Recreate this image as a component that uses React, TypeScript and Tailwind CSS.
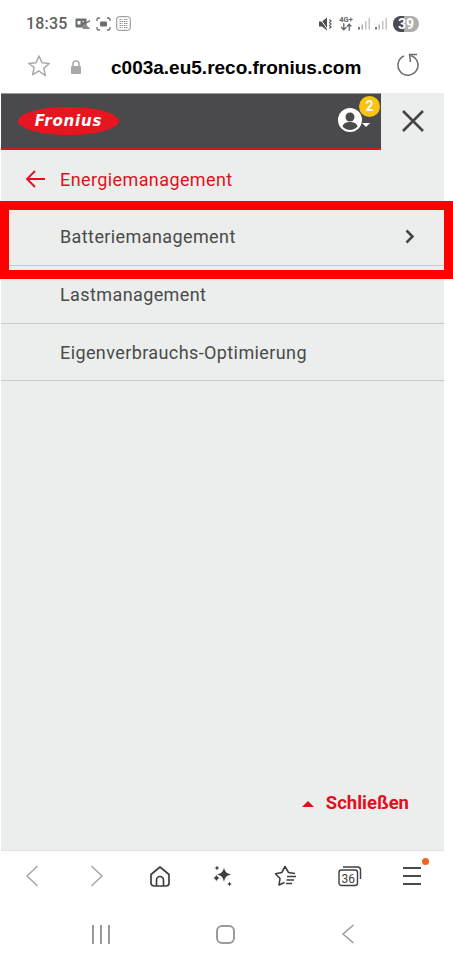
import React from "react";

function StatusLeft() {
  return (
    <div className="flex items-center">
      <span className="text-[16px] font-medium text-[#5f5f5f] leading-none tracking-[0.2px]">18:35</span>
      <svg width="16" height="13" viewBox="0 0 16 12" className="ml-[7px]">
        <rect x="0.5" y="1" width="11" height="9" rx="1" fill="#6f6f6f" />
        <rect x="2.5" y="3.500" width="3" height="3.500" fill="#fff" />
        <path d="M7 3.500l1 1.500 1-1.500z" fill="#fff" />
        <path d="M7 8.500L9.500 6l6 5.500H8z" fill="#8a8a8a" />
        <path d="M9.500 5.500L15 2.500v1.500l-4 2.200z" fill="#6f6f6f" />
      </svg>
      <svg width="15" height="14" viewBox="0 0 15 14" className="ml-[5px]" fill="none" stroke="#6f6f6f" strokeWidth="1.300">
        <path d="M1 4V2.500A1.500 1.500 0 012.500 1H4M11 1h1.500A1.500 1.500 0 0114 2.500V4M14 10v1.500a1.500 1.500 0 01-1.500 1.500H11M4 13H2.500A1.500 1.500 0 011 11.500V10" />
        <rect x="4" y="4.500" width="7" height="5" rx="1" fill="#6f6f6f" stroke="none" />
      </svg>
      <svg width="15" height="15" viewBox="0 0 15 15" className="ml-[5px]" fill="none" stroke="#8a8a8a" strokeWidth="1">
        <rect x="0.700" y="0.700" width="13.600" height="13.600" rx="2.500" />
        <path d="M3.500 3.500h3M8 3.500h3.500M3.500 5.500h8M3.500 7.500h3M8 7.500h3.500M3.500 9.500h8M3.500 11.500h3M8 11.500h3.500" strokeDasharray="1.500 .6" />
      </svg>
    </div>
  );
}

function Bars() {
  return (
    <svg width="13" height="13" viewBox="0 0 13 13">
      <rect x="0" y="10" width="2" height="2.500" fill="#777" />
      <rect x="3.500" y="7.500" width="1.500" height="5" fill="#aaa" />
      <rect x="7" y="4" width="1.500" height="8.500" fill="#c4c4c4" />
      <rect x="10.500" y="1" width="1.500" height="11.500" fill="#c4c4c4" />
    </svg>
  );
}

function StatusRight() {
  return (
    <div className="flex items-center">
      <svg width="13" height="14" viewBox="0 0 13 14" fill="#4f4f4f">
        <path d="M0 4.500h3L8 .5v13L3 9.500H0z" />
        <path d="M0.500 1l8.500 12" stroke="#fff" strokeWidth="1" />
        <path d="M10.500 2.500l1.500 1.500-1.500 1.500 1.500 1.500-1.500 1.500 1.500 1.500-1.500 1.500" fill="none" stroke="#4f4f4f" strokeWidth="1.100" />
      </svg>
      <div className="ml-[7px] w-[14px] flex flex-col items-center text-[#666] font-bold">
        <span className="text-[7.500px] leading-[7px]">4G+</span>
        <svg width="13" height="8" viewBox="0 0 12 7" fill="none" stroke="#666" strokeWidth="1.200">
          <path d="M3.500 0v6M1 3.500L3.500 6 6 3.500M8.500 7V1M6.500 3l2-2 2 2" />
        </svg>
      </div>
      <div className="ml-[5px]"><Bars /></div>
      <div className="ml-[4px]"><Bars /></div>
      <div className="ml-[5px] h-[16px] w-[26px] rounded-full bg-[#aeaeae] overflow-hidden relative flex items-center justify-center">
        <div className="absolute left-0 top-0 h-full w-[11px] bg-[#4b4b4b]" />
        <span className="relative text-[14px] leading-none font-bold text-white">39</span>
      </div>
    </div>
  );
}

function FroniusLogo() {
  return (
    <div className="w-[101px] h-[28px] rounded-[50%] bg-[#e8141f] flex items-center justify-center overflow-hidden">
      <span className="text-white italic font-bold text-[15px] leading-none tracking-[0.8px] font-['DejaVu_Sans',sans-serif]">Fronius</span>
    </div>
  );
}

function MenuRow({ label, chevron, last }: { label: string; chevron?: boolean; last?: boolean }) {
  return (
    <div className={last ? "h-[57px] flex items-center justify-between pt-[1px] pl-[59px] pr-[29px] border-b border-[#c9cbca]" : "h-[58px] flex items-center justify-between pl-[59px] pr-[29px] border-b border-[#c9cbca]"}>
      <span className="text-[18px] text-[#4a4a4a] tracking-[0.4px]">{label}</span>
      {chevron && (
        <svg width="10" height="15" viewBox="0 0 10 15" fill="none" stroke="#444" strokeWidth="2.500">
          <path d="M1.500 1.500l6 6-6 6" />
        </svg>
      )}
    </div>
  );
}

function BottomNav() {
  return (
    <div className="h-[50px] flex items-center justify-between pl-[25px] pr-[32px] pb-[1px] bg-white">
      <svg width="14" height="24" viewBox="0 0 14 24" fill="none" stroke="#a6a6a6" strokeWidth="1.500"><path d="M12.500 2L2 12l10.500 10" /></svg>
      <svg width="14" height="24" viewBox="0 0 14 24" fill="none" stroke="#a6a6a6" strokeWidth="1.500" className="ml-[10px]"><path d="M1.500 2L12 12 1.500 22" /></svg>
      <svg width="22" height="22" viewBox="0 0 22 22" fill="none" stroke="#3f3f3f" strokeWidth="1.700" className="ml-[4px]">
        <path d="M2 9.500L11 2l9 7.500V18a3 3 0 01-3 3H5a3 3 0 01-3-3z" strokeLinejoin="round" />
        <path d="M7.500 21v-6a3.500 3.500 0 017 0v6" />
      </svg>
      <svg width="22" height="22" viewBox="0 0 22 22" fill="#3f3f3f">
        <path d="M13 2.500c.9 4.300 2.600 6 7 7-4.400 1-6.100 2.700-7 7.500-.9-4.800-2.600-6.500-7-7.500 4.400-1 6.100-2.700 7-7z" />
        <path d="M5.500 8.500c.5 2.800 1.600 3.900 4.500 4.500-2.900.6-4 1.700-4.500 4.500C5 14.700 3.900 13.600 1 13c2.900-.6 4-1.700 4.500-4.500z" stroke="#fff" strokeWidth="0.800" />
        <path d="M6 .5l.8 1.700L8.500 3l-1.700.8L6 5.500l-.8-1.700L3.500 3l1.700-.8zM18.500 16.500l.7 1.800 1.800.7-1.800.7-.7 1.800-.7-1.800L16 19l1.800-.7z" />
      </svg>
      <svg width="23" height="22" viewBox="0 0 23 22" fill="none" stroke="#3f3f3f" strokeWidth="1.600" strokeLinejoin="round">
        <path d="M21 8.500l-6.500-1L11 1.500 7.800 7.500 1.500 8.800l4.500 4.700-1 6.500 5.500-2.500" />
        <path d="M13 11.500h9M12.500 15h7.500M12 18.500h6" />
      </svg>
      <svg width="24" height="22" viewBox="0 0 24 22" fill="none" stroke="#3f3f3f" strokeWidth="1.400">
        <rect x="1" y="5" width="18.500" height="15.500" rx="2.500" />
        <path d="M5 2h14.500a3 3 0 013 3v9" />
        <text x="10.200" y="17.500" textAnchor="middle" fontSize="12" fontFamily="Roboto, sans-serif" fill="#3f3f3f" stroke="none">36</text>
      </svg>
      <div className="relative w-[18px] h-[18px] flex flex-col justify-between">
        <div className="h-[2px] bg-[#4a4a4a]" />
        <div className="h-[2px] bg-[#4a4a4a]" />
        <div className="h-[2px] bg-[#4a4a4a]" />
        <div className="absolute -top-[9px] -right-[8px] w-[7px] h-[7px] rounded-full bg-[#f0641e]" />
      </div>
    </div>
  );
}

export default function App() {
  return (
    <div className="relative w-[453px] h-[960px] bg-white overflow-hidden font-['Roboto',sans-serif]">
      <div className="h-[46px] pl-[26px] pr-[34px] pt-[1px] flex items-center justify-between">
        <StatusLeft />
        <StatusRight />
      </div>
      <div className="h-[47px] flex items-center pl-[27px]">
        <svg width="24" height="24" viewBox="0 0 24 24" fill="none" stroke="#a9a9a9" strokeWidth="1.500" strokeLinejoin="round" className="mb-[7px]">
          <path d="M12 2l3 6.800 7.300.7-5.500 4.900 1.600 7.200L12 17l-6.400 3.600 1.600-7.200L1.700 9.500 9 8.800z" />
        </svg>
        <svg width="12" height="14" viewBox="0 0 12 14" className="ml-[19px] mb-[6px]" fill="#a9a9a9">
          <path d="M3 6V4a3 3 0 016 0v2" fill="none" stroke="#a9a9a9" strokeWidth="1.500" />
          <rect x="1" y="6" width="10" height="8" rx="1" />
        </svg>
        <span className="ml-[29px] mb-[5px] w-[257px] text-[19px] font-bold text-black leading-none font-['Liberation_Sans',sans-serif] whitespace-nowrap">c003a.eu5.reco.fronius.com</span>
        <svg width="24" height="24" viewBox="0 0 24 24" fill="none" stroke="#6b6b6b" strokeWidth="1.500" className="ml-[28px] mb-[9px]">
          <path d="M8 3a10 10 0 1 0 6.500 -.5" />
          <path d="M21 1.500h-7.500l1 7.500" />
        </svg>
      </div>
      <div className="ml-[1px] w-[443px] h-[757px] bg-[#eceeed] flex flex-col">
        <div className="flex h-[57px]">
          <div className="w-[380px] h-full bg-[#4a4a4c] border-b-2 border-[#d8141f] border-t border-t-[#9a9a9a] flex items-center justify-between pl-[17px] pr-[12px]">
            <FroniusLogo />
            <div className="relative w-[32px] h-[26px]">
              <svg width="24" height="24" viewBox="0 0 24 24" className="absolute left-[1px] top-0">
                <circle cx="12" cy="12" r="12" fill="#fff" />
                <circle cx="12" cy="9" r="4.500" fill="#4a4a4c" />
                <path d="M4.500 18.500c1-3.500 4-4.500 7.500-4.500s6.500 1 7.500 4.500A10 10 0 0112 22a10 10 0 01-7.500-3.500z" fill="#4a4a4c" />
              </svg>
              <div className="absolute left-[25px] top-[15px] w-0 h-0 border-x-[4px] border-x-transparent border-t-[4px] border-t-white" />
              <div className="absolute left-[22px] -top-[12px] w-[21px] h-[21px] rounded-full bg-[#fbc30f] text-white text-[14px] font-bold leading-[21px] text-center">2</div>
            </div>
          </div>
          <div className="flex-1 flex items-center justify-center pb-[2px]">
            <svg width="22" height="22" viewBox="0 0 22 22" fill="none" stroke="#444" strokeWidth="2.600">
              <path d="M1 1l20 20M21 1L1 21" />
            </svg>
          </div>
        </div>
        <div className="h-[58px] flex items-center pl-[24px]">
          <svg width="20" height="18" viewBox="0 0 20 18" fill="none" stroke="#e30f1c" strokeWidth="1.800">
            <path d="M20 9H2M10 1L2 9l8 8" />
          </svg>
          <span className="ml-[15px] text-[18px] text-[#e30f1c] tracking-[0.4px]">Energiemanagement</span>
        </div>
        <MenuRow label="Batteriemanagement" chevron />
        <MenuRow label="Lastmanagement" />
        <MenuRow label="Eigenverbrauchs-Optimierung" last />
        <div className="flex-1 flex items-end justify-end pr-[35px] pb-[38px]">
          <div className="flex items-center">
            <div className="w-0 h-0 border-x-[6px] border-x-transparent border-b-[6px] border-b-[#e30f1c] mt-[2px]" />
            <span className="ml-[12px] text-[18.500px] font-bold text-[#e30f1c] leading-none">Schließen</span>
          </div>
        </div>
      </div>
      <div className="w-[444px] pl-[1px]">
        <div className="border-t border-[#e3e3e3]" />
      </div>
      <BottomNav />
      <div className="h-[59px] flex items-center pt-[7px] pl-[92px] bg-white">
        <svg width="18" height="19" viewBox="0 0 18 19" fill="#9a9a9a">
          <rect x="0" y="0" width="2" height="19" /><rect x="8" y="0" width="2" height="19" /><rect x="16" y="0" width="2" height="19" />
        </svg>
        <div className="ml-[106px] w-[19px] h-[19px] rounded-[6px] border-2 border-[#9a9a9a]" />
        <svg width="14" height="20" viewBox="0 0 14 20" fill="none" stroke="#9a9a9a" strokeWidth="1.500" className="ml-[106px]">
          <path d="M12.500 1L2 10l10.500 9" />
        </svg>
      </div>
      <div className="absolute left-0 top-[201px] w-[453px] h-[78px] border-[9px] border-[#ff0000]" />
    </div>
  );
}
